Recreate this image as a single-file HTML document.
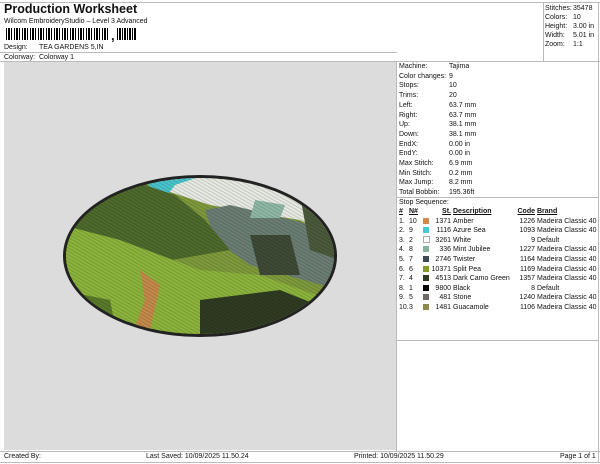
<!DOCTYPE html><html><head><style>
body{margin:0;width:600px;height:464px;background:#fff;font-family:"Liberation Sans",sans-serif;color:#111;position:relative;overflow:hidden}
.a{position:absolute;white-space:nowrap;font-size:7px;line-height:9px}
.ln{position:absolute;background:#bbb}
table{border-collapse:collapse;font-size:7px}
td{padding:0;height:9.6px;line-height:9.6px;white-space:nowrap}
.sw{display:inline-block;width:6px;height:6px;vertical-align:-1px}
</style></head><body>
<div class="ln" style="left:0;top:2px;width:600px;height:1px"></div>
<div class="ln" style="left:543px;top:2px;width:1px;height:60px"></div>
<div class="ln" style="left:598px;top:2px;width:1px;height:460px"></div>
<div class="a" style="left:4px;top:2px;font-size:12.5px;line-height:15px;font-weight:bold">Production Worksheet</div>
<div class="a" style="left:4px;top:17px">Wilcom EmbroideryStudio – Level 3 Advanced</div>
<div style="position:absolute;left:6px;top:28px;width:104px;height:12px;background:repeating-linear-gradient(90deg,#000 0 1px,#fff 1px 2px,#000 2px 4px,#fff 4px 5px,#000 5px 6px,#fff 6px 8px)"></div>
<div class="a" style="left:111px;top:29px;font-size:13px;line-height:13px;font-weight:bold">,</div>
<div style="position:absolute;left:117px;top:28px;width:20px;height:12px;background:repeating-linear-gradient(90deg,#000 0 1px,#fff 1px 2px,#000 2px 4px,#fff 4px 5px)"></div>
<div class="a" style="left:4px;top:43px">Design:</div><div class="a" style="left:39px;top:43px">TEA GARDENS 5,IN</div>
<div class="ln" style="left:0;top:52px;width:397px;height:1px"></div>
<div class="a" style="left:4px;top:53px">Colorway:</div><div class="a" style="left:39px;top:53px">Colorway 1</div>
<div class="ln" style="left:0;top:61px;width:600px;height:1px"></div>
<div style="position:absolute;left:4px;top:62px;width:392px;height:388px;background:#dcdcdc"></div>
<svg style="position:absolute;left:0;top:0" width="600" height="464">
<defs><clipPath id="c"><ellipse cx="200" cy="256" rx="134" ry="78"/></clipPath>
<pattern id="st" width="3" height="3" patternUnits="userSpaceOnUse" patternTransform="rotate(30)"><rect width="3" height="1" fill="#000" opacity=".15"/></pattern></defs>
<ellipse cx="200" cy="256" rx="137" ry="81" fill="#222"/>
<g clip-path="url(#c)">
<rect x="60" y="170" width="280" height="180" fill="#7f9a3c"/>
<path d="M140 170 L340 170 L340 240 L300 220 L250 212 L210 205 L170 192 Z" fill="#e6eae2"/>
<path d="M140 170 L220 170 L175 185 L160 205 Z" fill="#49c4cc"/>
<path d="M205 210 L230 205 L260 212 L300 222 L340 235 L340 290 L250 265 L215 240 Z" fill="#6b7e74"/>
<path d="M60 200 L145 185 L175 195 L205 220 L230 250 L160 262 L60 230 Z" fill="#4e6a2c"/>
<path d="M62 225 L120 240 L200 270 L260 275 L330 300 L340 350 L60 350 Z" fill="#8cb43c"/>
<path d="M140 270 L160 285 L150 330 L140 350 L130 340 L145 300 Z" fill="#c48a4a"/>
<path d="M200 300 L280 290 L330 310 L320 350 L200 350 Z" fill="#2f3b22"/>
<path d="M60 290 L110 300 L120 350 L60 350 Z" fill="#5a7a2a"/>
<path d="M250 235 L290 235 L300 275 L260 275 Z" fill="#3e4a36"/>
<path d="M255 200 L285 205 L280 218 L250 218 Z" fill="#8fb8a6"/>
<path d="M300 195 L340 180 L340 260 L310 250 Z" fill="#4a5a3a"/>
<rect x="60" y="170" width="280" height="180" fill="url(#st)"/>
</g>
</svg>
<div class="ln" style="left:396px;top:62px;width:1px;height:390px"></div>
<div class="a" style="left:545px;top:4px">Stitches:</div><div class="a" style="left:573px;top:4px">35478</div>
<div class="a" style="left:545px;top:13px">Colors:</div><div class="a" style="left:573px;top:13px">10</div>
<div class="a" style="left:545px;top:22px">Height:</div><div class="a" style="left:573px;top:22px">3.00 in</div>
<div class="a" style="left:545px;top:31px">Width:</div><div class="a" style="left:573px;top:31px">5.01 in</div>
<div class="a" style="left:545px;top:40px">Zoom:</div><div class="a" style="left:573px;top:40px">1:1</div>
<div style="position:absolute;left:399px;top:62px">
<div class="a" style="top:0">Machine:</div><div class="a" style="left:50px;top:0">Tajima</div>
<div class="a" style="top:9.7px">Color changes:</div><div class="a" style="left:50px;top:9.7px">9</div>
<div class="a" style="top:19.4px">Stops:</div><div class="a" style="left:50px;top:19.4px">10</div>
<div class="a" style="top:29.1px">Trims:</div><div class="a" style="left:50px;top:29.1px">20</div>
<div class="a" style="top:38.8px">Left:</div><div class="a" style="left:50px;top:38.8px">63.7 mm</div>
<div class="a" style="top:48.5px">Right:</div><div class="a" style="left:50px;top:48.5px">63.7 mm</div>
<div class="a" style="top:58.2px">Up:</div><div class="a" style="left:50px;top:58.2px">38.1 mm</div>
<div class="a" style="top:67.9px">Down:</div><div class="a" style="left:50px;top:67.9px">38.1 mm</div>
<div class="a" style="top:77.6px">EndX:</div><div class="a" style="left:50px;top:77.6px">0.00 in</div>
<div class="a" style="top:87.3px">EndY:</div><div class="a" style="left:50px;top:87.3px">0.00 in</div>
<div class="a" style="top:97px">Max Stitch:</div><div class="a" style="left:50px;top:97px">6.9 mm</div>
<div class="a" style="top:106.7px">Min Stitch:</div><div class="a" style="left:50px;top:106.7px">0.2 mm</div>
<div class="a" style="top:116.4px">Max Jump:</div><div class="a" style="left:50px;top:116.4px">8.2 mm</div>
<div class="a" style="top:126.1px">Total Bobbin:</div><div class="a" style="left:50px;top:126.1px">195.36ft</div>
</div>
<div class="ln" style="left:396px;top:197px;width:203px;height:1px"></div>
<div class="a" style="left:399px;top:198px">Stop Sequence:</div>
<table style="position:absolute;left:399px;top:207px">
<tr style="font-weight:bold;text-decoration:underline"><td style="width:10px">#</td><td style="width:14px">N#</td><td style="width:8px"></td><td style="width:20px;text-align:right">St.</td><td style="width:60px;padding-left:2px">Description</td><td style="width:22px;text-align:right">Code</td><td style="padding-left:2px">Brand</td></tr>
<tr><td>1.</td><td>10</td><td><span class="sw" style="background:#d4884e"></span></td><td align="right">1371</td><td style="padding-left:2px">Amber</td><td align="right">1226</td><td style="padding-left:2px">Madeira Classic 40</td></tr>
<tr><td>2.</td><td>9</td><td><span class="sw" style="background:#4cc4d8"></span></td><td align="right">1116</td><td style="padding-left:2px">Azure Sea</td><td align="right">1093</td><td style="padding-left:2px">Madeira Classic 40</td></tr>
<tr><td>3.</td><td>2</td><td><span class="sw" style="background:#fff;border:1px solid #aaa;width:5px;height:5px"></span></td><td align="right">3261</td><td style="padding-left:2px">White</td><td align="right">9</td><td style="padding-left:2px">Default</td></tr>
<tr><td>4.</td><td>8</td><td><span class="sw" style="background:#8ab0a0"></span></td><td align="right">336</td><td style="padding-left:2px">Mint Jubilee</td><td align="right">1227</td><td style="padding-left:2px">Madeira Classic 40</td></tr>
<tr><td>5.</td><td>7</td><td><span class="sw" style="background:#3c4a52"></span></td><td align="right">2746</td><td style="padding-left:2px">Twister</td><td align="right">1164</td><td style="padding-left:2px">Madeira Classic 40</td></tr>
<tr><td>6.</td><td>6</td><td><span class="sw" style="background:#849a2c"></span></td><td align="right">10371</td><td style="padding-left:2px">Split Pea</td><td align="right">1169</td><td style="padding-left:2px">Madeira Classic 40</td></tr>
<tr><td>7.</td><td>4</td><td><span class="sw" style="background:#2e3a22"></span></td><td align="right">4513</td><td style="padding-left:2px">Dark Camo Green</td><td align="right">1357</td><td style="padding-left:2px">Madeira Classic 40</td></tr>
<tr><td>8.</td><td>1</td><td><span class="sw" style="background:#000"></span></td><td align="right">9800</td><td style="padding-left:2px">Black</td><td align="right">8</td><td style="padding-left:2px">Default</td></tr>
<tr><td>9.</td><td>5</td><td><span class="sw" style="background:#6e6a64"></span></td><td align="right">481</td><td style="padding-left:2px">Stone</td><td align="right">1240</td><td style="padding-left:2px">Madeira Classic 40</td></tr>
<tr><td>10.</td><td>3</td><td><span class="sw" style="background:#8e8a48"></span></td><td align="right">1481</td><td style="padding-left:2px">Guacamole</td><td align="right">1106</td><td style="padding-left:2px">Madeira Classic 40</td></tr>
</table>
<div class="ln" style="left:396px;top:340px;width:203px;height:1px"></div>
<div class="ln" style="left:0;top:451px;width:600px;height:1px"></div>
<div class="ln" style="left:0;top:462px;width:600px;height:1px"></div>
<div class="a" style="left:4px;top:452px">Created By:</div>
<div class="a" style="left:146px;top:452px">Last Saved: 10/09/2025 11.50.24</div>
<div class="a" style="left:354px;top:452px">Printed: 10/09/2025 11.50.29</div>
<div class="a" style="left:560px;top:452px">Page 1 of 1</div>
</body></html>
